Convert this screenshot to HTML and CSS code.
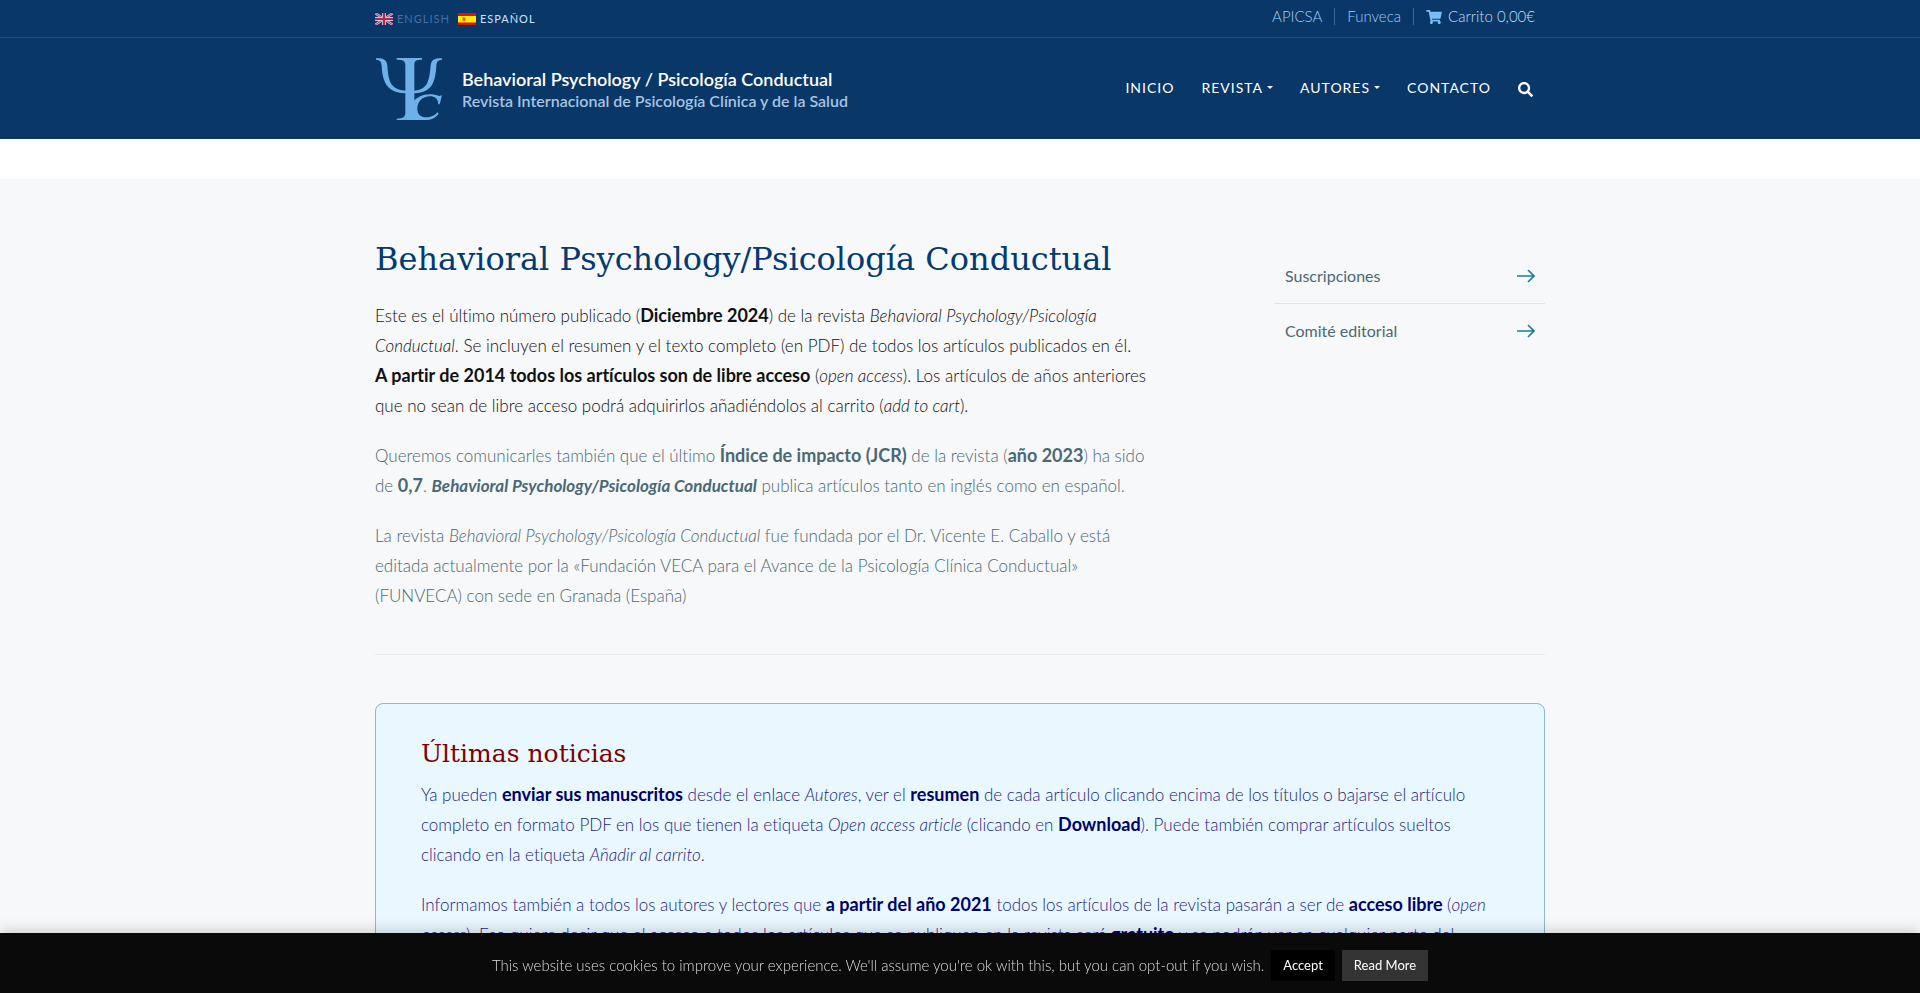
FILE: index.html
```html
<!DOCTYPE html>
<html lang="es">
<head>
<meta charset="utf-8">
<meta name="viewport" content="width=device-width, initial-scale=1">
<title>Behavioral Psychology / Psicología Conductual</title>
<link rel="stylesheet" href="styles.css">
</head>
<body>
<header class="site-header">
  <div class="topbar">
    <div class="container topbar-row">
      <nav class="langs" aria-label="Idioma">
        <a class="lang lang-off" href="#">
          <svg class="flag" viewBox="0 0 18 12" aria-hidden="true"><rect width="18" height="12" fill="#1c2a78"/><path d="M0 0L18 12M18 0L0 12" stroke="#c5c4d8" stroke-width="2.4"/><path d="M0 0L18 12M18 0L0 12" stroke="#b8304a" stroke-width=".9"/><path d="M9 0V12M0 6H18" stroke="#c5c4d8" stroke-width="4"/><path d="M9 0V12M0 6H18" stroke="#b02a48" stroke-width="2.2"/></svg>
          <span>ENGLISH</span></a>
        <a class="lang" href="#">
          <svg class="flag" viewBox="0 0 18 12" aria-hidden="true"><rect width="18" height="12" fill="#e01010"/><rect y="3" width="18" height="6.5" fill="#ffee00"/><path d="M4.500 4.500h3v2.500l-1.500 1.500-1.500-1.500z" fill="#c8541c"/><path d="M5.500 5.500h1v1h-1z" fill="#e8c080"/></svg>
          <span>ESPAÑOL</span></a>
      </nav>
      <nav class="toplinks" aria-label="Enlaces">
        <a href="#">APICSA</a>
        <a href="#">Funveca</a>
        <a class="cart" href="#"><svg class="cart-icon" viewBox="0 0 576 512" aria-hidden="true"><path fill="currentColor" d="M528.120 301.319l47.273-208C578.806 78.301 567.391 64 551.990 64H159.208l-9.166-44.810C147.758 8.021 137.930 0 126.529 0H24C10.745 0 0 10.745 0 24v16c0 13.255 10.745 24 24 24h69.883l70.248 343.435C147.325 417.100 136 435.222 136 456c0 30.928 25.072 56 56 56s56-25.072 56-56c0-15.674-6.447-29.835-16.824-40h209.647C430.447 426.165 424 440.326 424 456c0 30.928 25.072 56 56 56s56-25.072 56-56c0-22.172-12.888-41.332-31.579-50.405l5.517-24.276c3.413-15.018-8.002-29.319-23.403-29.319H218.117l-6.545-32h293.145c11.206 0 20.920-7.754 23.403-18.681z"/></svg> Carrito 0,00€</a>
      </nav>
    </div>
  </div>
  <div class="container masthead">
    <a class="brand" href="#">
      <svg class="logo" viewBox="0 0 198 186" aria-hidden="true"><g fill="#70b0ea"><path d="M0 1C18 0 32 3 34 22C37 58 38 96 88 98V22C88 8 80 5 62 5V0H138V5C120 5 115 8 115 22V98C160 96 160 58 164 22C166 3 180 0 198 1V5C186 6 182 10 181 24C178 66 172 104 115 106V164C115 178 118 181 134 182V186H62V182C80 181 88 178 88 164V106C28 104 20 66 17 24C16 10 12 6 0 5Z"/><path d="M198 112L191 139H187C186 122 176 115 162 115C140 115 124 130 124 152C124 171 136 178 152 178C168 178 177 171 184 163L188 167C178 180 166 186 148 186H106V138C120 118 140 109 162 109C172 109 180 111 190 114Z"/></g></svg>
      <span class="brand-text"><span class="brand-name">Behavioral Psychology / Psicología Conductual</span><span class="brand-sub">Revista Internacional de Psicología Clínica y de la Salud</span></span>
    </a>
    <nav class="mainnav" aria-label="Principal">
      <a href="#">INICIO</a>
      <a class="has-menu" href="#">REVISTA</a>
      <a class="has-menu" href="#">AUTORES</a>
      <a href="#">CONTACTO</a>
      <button class="search" type="button" aria-label="Buscar"><svg class="search-icon" viewBox="0 0 512 512" aria-hidden="true"><path fill="currentColor" d="M505 442.700L405.300 343c-4.500-4.500-10.600-7-17-7H372c27.600-35.300 44-79.700 44-128C416 93.100 322.900 0 208 0S0 93.100 0 208s93.100 208 208 208c48.300 0 92.700-16.400 128-44v16.300c0 6.400 2.500 12.500 7 17l99.700 99.700c9.400 9.400 24.600 9.400 33.900 0l28.300-28.300c9.400-9.400 9.400-24.600.1-34zM208 336c-70.700 0-128-57.200-128-128 0-70.700 57.200-128 128-128 70.700 0 128 57.200 128 128 0 70.700-57.200 128-128 128z"/></svg></button>
    </nav>
  </div>
</header>
<main class="page">
  <div class="container">
    <div class="intro">
      <article class="about">
        <h1>Behavioral Psychology/Psicología Conductual</h1>
        <p class="ink">Este es el último número publicado (<strong>Diciembre 2024</strong>) de la revista <em>Behavioral Psychology/Psicología Conductual</em>. Se incluyen el resumen y el texto completo (en PDF) de todos los artículos publicados en él.<br><strong>A partir de 2014 todos los artículos son de libre acceso</strong> (<em>open access</em>). Los artículos de años anteriores que no sean de libre acceso podrá adquirirlos añadiéndolos al carrito (<em>add to cart</em>).</p>
        <p>Queremos comunicarles también que el último <strong>Índice de impacto (JCR)</strong> de la revista (<strong>año 2023</strong>) ha sido de <strong>0,7</strong>. <strong><em>Behavioral Psychology/Psicología Conductual</em></strong> publica artículos tanto en inglés como en español.</p>
        <p>La revista <em>Behavioral Psychology/Psicología Conductual</em> fue fundada por el Dr. Vicente E. Caballo y está editada actualmente por la «Fundación VECA para el Avance de la Psicología Clínica Conductual» (FUNVECA) con sede en Granada (España)</p>
      </article>
      <aside class="side">
        <a href="#">Suscripciones<svg class="arrow" viewBox="0 0 18 14" aria-hidden="true"><path d="M0 7H17M11 1L17 7L11 13"/></svg></a>
        <a href="#">Comité editorial<svg class="arrow" viewBox="0 0 18 14" aria-hidden="true"><path d="M0 7H17M11 1L17 7L11 13"/></svg></a>
      </aside>
    </div>
    <section class="news">
      <h2>Últimas noticias</h2>
      <p>Ya pueden <strong>enviar sus manuscritos</strong> desde el enlace <em>Autores</em>, ver el <strong>resumen</strong> de cada artículo clicando encima de los títulos o bajarse el artículo completo en formato PDF en los que tienen la etiqueta <em>Open access article</em> (clicando en <strong>Download</strong>). Puede también comprar artículos sueltos clicando en la etiqueta <em>Añadir al carrito</em>.</p>
      <p>Informamos también a todos los autores y lectores que <strong>a partir del año 2021</strong> todos los artículos de la revista pasarán a ser de <strong>acceso libre</strong> (<em>open access</em>). Eso quiere decir que el acceso a todos los artículos que se publiquen en la revista será <strong>gratuito</strong> y se podrán ver en cualquier parte del mundo.</p>
    </section>
  </div>
</main>
<div class="cookies" role="region" aria-label="Cookies">
  <span>This website uses cookies to improve your experience. We'll assume you're ok with this, but you can opt-out if you wish.</span>
  <button class="accept" type="button">Accept</button>
  <a class="more" href="#">Read More</a>
</div>
</body>
</html>
```
FILE: styles.css
```css
* { box-sizing: border-box; }
body {
  margin: 0;
  font: 300 17px/30px Lato, "Open Sans", sans-serif;
  font-variant-ligatures: none;
  color: #4b6873;
  background: #fff;
}
a { color: inherit; text-decoration: none; }
p { margin: 0 0 20px; }
strong { font-size: 18px; line-height: 20px; font-weight: 700; }
strong em { font-size: 17px; }
.container { max-width: 1200px; margin: 0 auto; padding: 0 15px; }

.site-header { background: #083768; }
.topbar { border-bottom: 1px solid #204c7c; }
.topbar-row { display: flex; justify-content: space-between; height: 37px; }
.langs { display: flex; align-items: center; gap: 8px; font-size: 11px; line-height: 16px; font-weight: 400; letter-spacing: 1px; color: #cfe4f8; }
.lang { display: flex; align-items: center; gap: 4px; }
.lang-off { color: #4670a0; }
.flag { width: 18px; height: 12px; }
.toplinks { display: flex; align-items: center; font-size: 15px; line-height: 17px; color: #a5cdf3; padding: 0 10px 4px 0; }
.toplinks a { padding: 0 12px; }
.toplinks a + a { border-left: 1px solid #3c6c9e; }
.toplinks .cart { display: flex; align-items: center; gap: 6px; color: #c5def5; padding: 0 0 0 12px; }
.cart-icon { width: 16px; height: 14px; color: #7bbcf5; }

.masthead { display: flex; justify-content: space-between; align-items: center; height: 101px; }
.brand { display: flex; align-items: center; gap: 20px; }
.logo { width: 66px; height: 62px; margin-left: 1px; }
.brand-text { display: flex; flex-direction: column; padding-top: 3px; }
.brand-name { font-size: 18px; line-height: 22px; font-weight: 600; color: #fff; }
.brand-sub { font-size: 16px; line-height: 22px; font-weight: 600; color: #a6c4e2; }
.mainnav { display: flex; align-items: center; gap: 27px; font-size: 14px; line-height: 20px; font-weight: 400; letter-spacing: 1px; color: #fff; padding: 0 12px 2px 0; }
.has-menu { display: flex; align-items: center; gap: 4px; }
.has-menu::after { content: ""; border: 3px solid transparent; border-top-color: #fff; border-bottom: 0; }
.search { border: 0; padding: 4px 0 0; background: none; color: #fff; display: flex; }
.search-icon { width: 15px; height: 15px; }

.page { margin-top: 40px; background: #f6f8fa; padding: 59px 0 60px; }
.intro { display: grid; grid-template-columns: minmax(0, 775px) 270px; justify-content: space-between; border-bottom: 1px solid #e6eaed; padding-bottom: 23px; margin-bottom: 48px; }
h1, h2 { font-family: "DejaVu Serif", serif; font-weight: 400; margin: 0; }
h1 { font-size: 32px; line-height: 43px; color: #043a70; margin-bottom: 20px; }
.ink { color: #111; }
.side { padding-top: 10px; }
.side a { display: flex; justify-content: space-between; align-items: center; height: 55px; padding: 0 10px; font-size: 16px; line-height: 24px; font-weight: 400; }
.side a + a { border-top: 1px solid #dbe3e8; }
.arrow { width: 18px; height: 14px; fill: none; stroke: #16809c; stroke-width: 1.6; }

.news { background: #e9f7fe; border: 1px solid #8dbcc8; border-radius: 8px; padding: 32px 45px 40px; color: #1c1c84; }
.news strong { color: #00006e; }
h2 { font-size: 25px; line-height: 36px; color: #800000; margin-bottom: 8px; }

.cookies { position: fixed; left: 0; right: 0; bottom: 0; min-height: 60px; display: flex; align-items: center; justify-content: center; gap: 7px; padding-top: 4px; background: #0a0a0a; color: #ddd; font-size: 15px; line-height: 20px; box-shadow: 0 -4px 12px rgba(0, 0, 0, .15); }
.accept, .more { border: 0; font: 400 13px/19px Lato, sans-serif; color: #fff; padding: 6px 12px; background: #000; }
.more { background: #333; }
```
